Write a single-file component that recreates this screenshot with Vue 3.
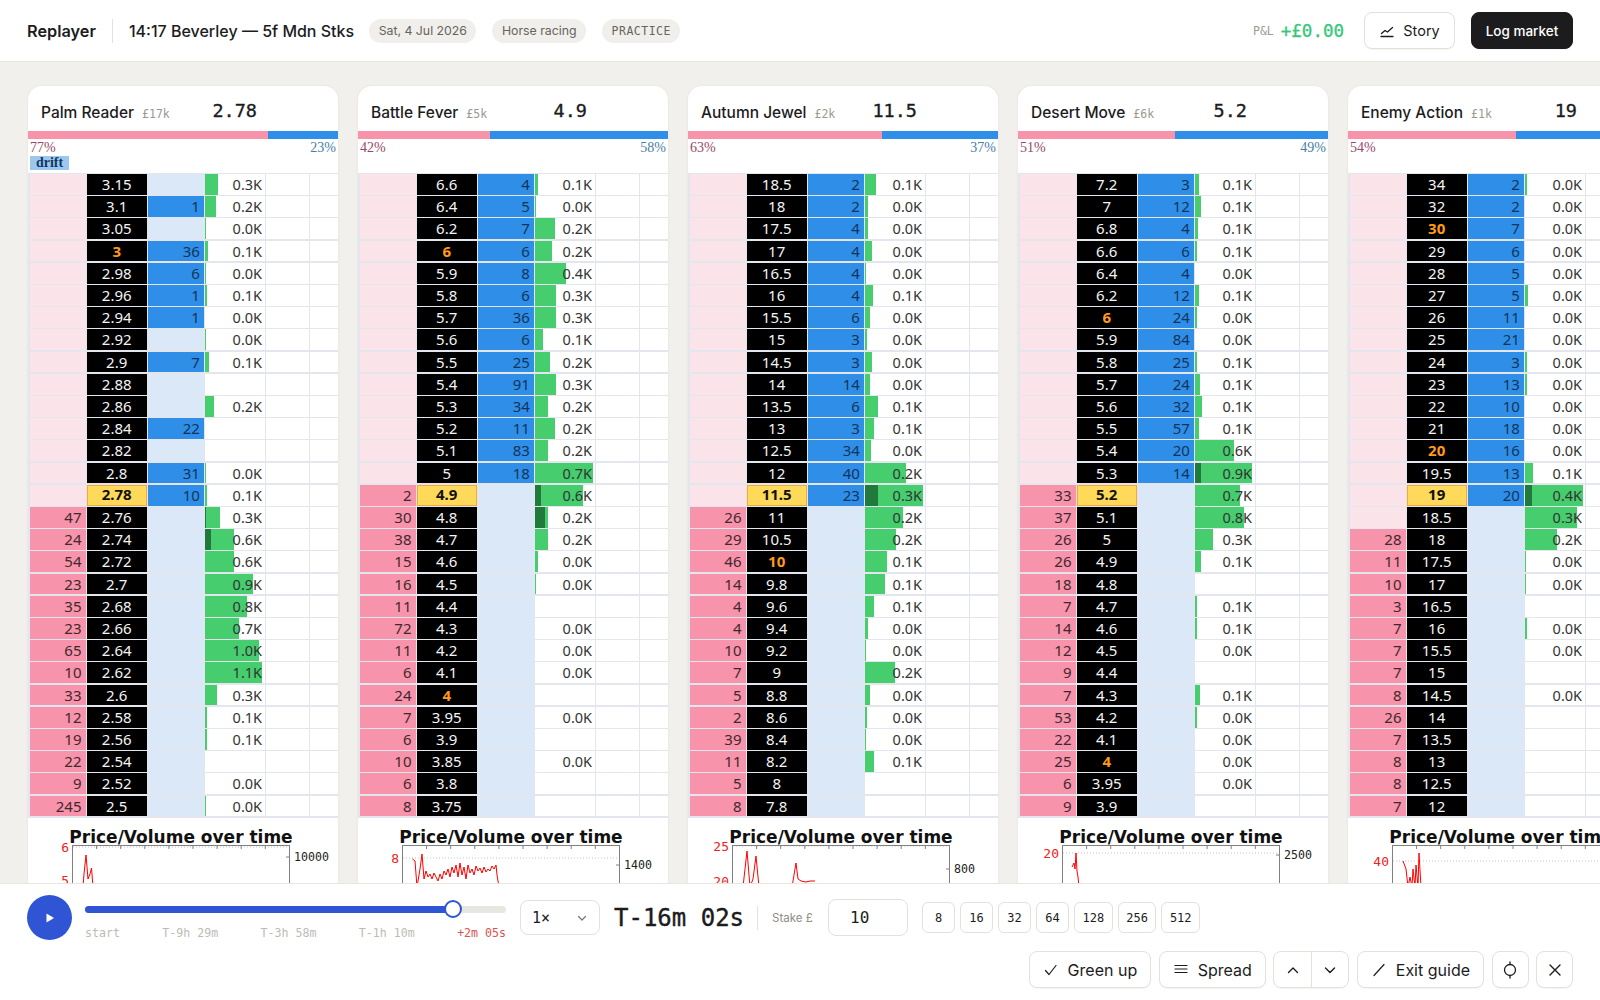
<template>
  <div class="app">
    <header class="topbar">
      <span class="brand">Replayer</span>
      <span class="vline"></span>
      <span class="race">14:17 Beverley — 5f Mdn Stks</span>
      <span class="pill">Sat, 4 Jul 2026</span>
      <span class="pill">Horse racing</span>
      <span class="pill pill--mono">PRACTICE</span>
      <div class="topbar-right">
        <span class="pnl-label">P&amp;L</span>
        <span class="pnl-value">+£0.00</span>
        <button type="button" class="btn btn--story">
          <svg width="16" height="16" viewBox="0 0 16 16" fill="none" stroke="currentColor" stroke-width="1.3" stroke-linecap="round" stroke-linejoin="round">
            <path d="M2 13.5h12" />
            <path d="M2.5 10.5l3.5-3 2.5 1.5 5-4.5" />
          </svg>
          Story
        </button>
        <button type="button" class="btn btn--dark">Log market</button>
      </div>
    </header>

    <main class="board">
      <section v-for="m in markets" :key="m.name" class="card">
        <div class="card-head">
          <span class="runner">{{ m.name }}</span>
          <span class="matched">{{ m.matched }}</span>
          <span class="ltp">{{ m.ltp }}</span>
        </div>
        <div class="split">
          <div class="split-back" :style="{ width: m.barPct + '%' }"></div>
          <div class="split-lay"></div>
        </div>
        <div class="meta">
          <div class="meta-pcts">
            <span class="pct-back">{{ m.backPct }}%</span>
            <span class="pct-lay">{{ 100 - m.backPct }}%</span>
          </div>
          <span v-if="m.drift" class="drift">drift</span>
        </div>
        <div class="ladder">
          <div v-for="(r, i) in m.rows" :key="r[1]" class="row">
            <div class="cell back" :class="{ 'back--on': r[0] }">{{ r[0] }}</div>
            <div class="cell price" :class="{ 'price--cur': i === 14, 'price--round': i !== 14 && roundPrices.includes(r[1]) }">{{ r[1] }}</div>
            <div class="cell lay" :class="{ 'lay--on': r[2] }">{{ r[2] }}</div>
            <div class="cell vol">
              <span v-if="r[4]" class="vol-bar" :style="{ width: r[4] + 'px' }"></span>
              <span v-if="r[5]" class="vol-mine" :style="{ width: r[5] + 'px' }"></span>
              <span class="vol-text">{{ r[3] }}</span>
            </div>
            <div class="cell blank"></div>
            <div class="cell blank"></div>
          </div>
        </div>
        <svg class="chart" width="310" height="170" viewBox="0 0 310 170">
          <text x="153" y="22" class="chart-title" text-anchor="middle">Price/Volume over time</text>
          <line x1="45" x2="261" :y1="m.gridY" :y2="m.gridY" class="chart-grid" />
          <rect x="44.5" y="24.5" width="217" height="140" class="chart-frame" />
          <line v-for="t in 8" :key="t" :x1="44.5 + t * 24.1" :x2="44.5 + t * 24.1" y1="25" y2="28" class="chart-tick" />
          <polyline :points="m.line" class="chart-line" />
          <text v-for="l in m.left" :key="l[0]" x="41" :y="l[1] + 5" class="chart-left" text-anchor="end">{{ l[0] }}</text>
          <line x1="258" x2="261" :y1="m.right[1]" :y2="m.right[1]" class="chart-tick" />
          <text x="266" :y="m.right[1] + 4" class="chart-right">{{ m.right[0] }}</text>
        </svg>
      </section>
    </main>

    <footer class="dock">
      <div class="dock-row">
        <button type="button" class="play" aria-label="Play">
          <svg width="12" height="12" viewBox="0 0 12 12"><path d="M2.5 1.5v9l7.5-4.5z" fill="#fff" /></svg>
        </button>
        <div class="scrub">
          <div class="track">
            <div class="track-fill"></div>
            <span class="thumb"></span>
          </div>
          <div class="scrub-labels">
            <span>start</span>
            <span>T-9h 29m</span>
            <span>T-3h 58m</span>
            <span>T-1h 10m</span>
            <span class="scrub-end">+2m 05s</span>
          </div>
        </div>
        <div class="speed">
          <span>1×</span>
          <svg width="12" height="12" viewBox="0 0 12 12" fill="none" stroke="#77756f" stroke-width="1.2" stroke-linecap="round" stroke-linejoin="round"><path d="M2.5 4.5L6 8l3.5-3.5" /></svg>
        </div>
        <span class="clock">T-16m 02s</span>
        <span class="vline vline--dock"></span>
        <span class="stake-label">Stake £</span>
        <div class="stake">10</div>
        <div class="chips">
          <button v-for="c in stakes" :key="c" type="button" class="chip">{{ c }}</button>
        </div>
      </div>
      <div class="dock-row dock-row--actions">
        <button type="button" class="btn btn--action">
          <svg width="16" height="16" viewBox="0 0 16 16" fill="none" stroke="currentColor" stroke-width="1.2" stroke-linecap="round" stroke-linejoin="round"><path d="M2.5 8.5l3.5 4L13 3.5" /></svg>
          Green up
        </button>
        <button type="button" class="btn btn--action">
          <svg width="16" height="16" viewBox="0 0 16 16" fill="none" stroke="currentColor" stroke-width="1.2" stroke-linecap="round"><path d="M2 3.5h12M2 7h12M2 10.5h12" /></svg>
          Spread
        </button>
        <div class="stepper">
          <button type="button" class="step" aria-label="Up">
            <svg width="14" height="14" viewBox="0 0 14 14" fill="none" stroke="currentColor" stroke-width="1.4" stroke-linecap="round" stroke-linejoin="round"><path d="M2.5 9.5L7 5l4.5 4.5" /></svg>
          </button>
          <button type="button" class="step" aria-label="Down">
            <svg width="14" height="14" viewBox="0 0 14 14" fill="none" stroke="currentColor" stroke-width="1.4" stroke-linecap="round" stroke-linejoin="round"><path d="M2.5 5L7 9.5 11.5 5" /></svg>
          </button>
        </div>
        <button type="button" class="btn btn--action">
          <svg width="16" height="16" viewBox="0 0 16 16" fill="none" stroke="currentColor" stroke-width="1.2" stroke-linecap="round"><path d="M3 13.5L13 2.5" /></svg>
          Exit guide
        </button>
        <button type="button" class="btn btn--icon" aria-label="Focus">
          <svg width="16" height="18" viewBox="0 0 16 18" fill="none" stroke="currentColor" stroke-width="1.3" stroke-linecap="round"><circle cx="8" cy="9" r="5.5" /><path d="M8 1v2.5M8 14.5V17" /></svg>
        </button>
        <button type="button" class="btn btn--icon" aria-label="Close">
          <svg width="14" height="14" viewBox="0 0 14 14" fill="none" stroke="currentColor" stroke-width="1.4" stroke-linecap="round"><path d="M2 2l10 10M12 2L2 12" /></svg>
        </button>
      </div>
    </footer>
  </div>
</template>

<script setup>
const stakes = [8, 16, 32, 64, 128, 256, 512]
const roundPrices = ['3', '4', '6', '10', '20', '30']

// [back, price, lay, volume, bar px, own-money px]
const markets = [
  {
    name: 'Palm Reader', matched: '£17k', ltp: '2.78', backPct: 77, barPct: 77.5, drift: true, gridY: 26,
    left: [['6', 26], ['5', 59]], right: ['10000', 36],
    line: '55,66 56,53 58,34 60,58 62,53 63.5,47 65,66',
    rows: [
      ['', '3.15', '', '0.3K', 12.7], ['', '3.1', '1', '0.2K', 10.7], ['', '3.05', '', '0.0K', 1],
      ['', '3', '36', '0.1K', 2.7], ['', '2.98', '6', '0.0K', 1], ['', '2.96', '1', '0.1K', 2],
      ['', '2.94', '1', '0.0K', 0], ['', '2.92', '', '0.0K', 1], ['', '2.9', '7', '0.1K', 4.3],
      ['', '2.88', '', ''], ['', '2.86', '', '0.2K', 9.3], ['', '2.84', '22', ''],
      ['', '2.82', '', ''], ['', '2.8', '31', '0.0K', 1], ['', '2.78', '10', '0.1K', 1.5],
      ['47', '2.76', '', '0.3K', 15, 1], ['24', '2.74', '', '0.6K', 28.7, 6], ['54', '2.72', '', '0.6K', 28.7],
      ['23', '2.7', '', '0.9K', 47.7], ['35', '2.68', '', '0.8K', 42], ['23', '2.66', '', '0.7K', 34],
      ['65', '2.64', '', '1.0K', 54], ['10', '2.62', '', '1.1K', 57], ['33', '2.6', '', '0.3K', 12],
      ['12', '2.58', '', '0.1K', 1.5], ['19', '2.56', '', '0.1K', 2], ['22', '2.54', '', ''],
      ['9', '2.52', '', '0.0K'], ['245', '2.5', '', '0.0K', 1],
    ],
  },
  {
    name: 'Battle Fever', matched: '£5k', ltp: '4.9', backPct: 42, barPct: 42.5, gridY: 37,
    left: [['8', 37]], right: ['1400', 44],
    line: '54.5,38 57,40 59,66 62,48 64,33 66,58 68,50 70,56 72,53 74,58 76,52 78,56 80,60 82,53 84,58 86,50 88,54 90,48 92,56 94,46 96,52 98,44 100,56 102,42 104,54 106,46 108,58 110,44 112,52 114,48 116,54 118,45 120,50 122,47 124,52 126,46 128,51 130,48 132,50 134,45 136,48 138,44 139,54 141,66',
    rows: [
      ['', '6.6', '4', '0.1K', 3], ['', '6.4', '5', '0.0K', 1], ['', '6.2', '7', '0.2K', 20],
      ['', '6', '6', '0.2K', 17], ['', '5.9', '8', '0.4K', 30.6], ['', '5.8', '6', '0.3K', 21],
      ['', '5.7', '36', '0.3K', 21], ['', '5.6', '6', '0.1K', 8], ['', '5.5', '25', '0.2K', 15],
      ['', '5.4', '91', '0.3K', 21], ['', '5.3', '34', '0.2K', 13], ['', '5.2', '11', '0.2K', 20],
      ['', '5.1', '83', '0.2K', 12.6], ['', '5', '18', '0.7K', 57.5], ['2', '4.9', '', '0.6K', 48, 6],
      ['30', '4.8', '', '0.2K', 13, 10], ['38', '4.7', '', '0.2K', 13], ['15', '4.6', '', '0.0K', 3],
      ['16', '4.5', '', '0.0K', 1], ['11', '4.4', '', ''], ['72', '4.3', '', '0.0K'],
      ['11', '4.2', '', '0.0K'], ['6', '4.1', '', '0.0K'], ['24', '4', '', ''],
      ['7', '3.95', '', '0.0K'], ['6', '3.9', '', ''], ['10', '3.85', '', '0.0K'],
      ['6', '3.8', '', ''], ['8', '3.75', '', ''],
    ],
  },
  {
    name: 'Autumn Jewel', matched: '£2k', ltp: '11.5', backPct: 63, barPct: 62.6, gridY: 25,
    left: [['25', 25], ['20', 60]], right: ['800', 48],
    line: '55,66 59,30 62,66 65,58 68,35 71,66 104,66 108,42 110,58 113,60 118,61 122,60 127,60',
    rows: [
      ['', '18.5', '2', '0.1K', 10.6], ['', '18', '2', '0.0K', 3], ['', '17.5', '4', '0.0K', 2.5],
      ['', '17', '4', '0.0K', 6.5], ['', '16.5', '4', '0.0K', 0.5], ['', '16', '4', '0.1K', 7.8],
      ['', '15.5', '6', '0.0K', 5], ['', '15', '3', '0.0K', 1.5], ['', '14.5', '3', '0.0K', 7],
      ['', '14', '14', '0.0K', 5.3], ['', '13.5', '6', '0.1K', 13], ['', '13', '3', '0.1K', 8.6],
      ['', '12.5', '34', '0.0K', 6], ['', '12', '40', '0.2K', 41], ['', '11.5', '23', '0.3K', 57.5, 13],
      ['26', '11', '', '0.2K', 37.5], ['29', '10.5', '', '0.2K', 30.6], ['46', '10', '', '0.1K', 21.6],
      ['14', '9.8', '', '0.1K', 20], ['4', '9.6', '', '0.1K', 8.6], ['4', '9.4', '', '0.0K', 3],
      ['10', '9.2', '', '0.0K', 1], ['7', '9', '', '0.2K', 30], ['5', '8.8', '', '0.0K', 4.5],
      ['2', '8.6', '', '0.0K', 1.5], ['39', '8.4', '', '0.0K', 1], ['11', '8.2', '', '0.1K', 9.4],
      ['5', '8', '', ''], ['8', '7.8', '', ''],
    ],
  },
  {
    name: 'Desert Move', matched: '£6k', ltp: '5.2', backPct: 51, barPct: 50.7, gridY: 32,
    left: [['20', 32]], right: ['2500', 34],
    line: '54,46 56,42 57,48 58,32 59,50 60,56 61,66',
    rows: [
      ['', '7.2', '3', '0.1K', 4], ['', '7', '12', '0.1K', 6], ['', '6.8', '4', '0.1K', 2.6],
      ['', '6.6', '6', '0.1K', 2], ['', '6.4', '4', '0.0K'], ['', '6.2', '12', '0.1K', 4],
      ['', '6', '24', '0.0K', 1.5], ['', '5.9', '84', '0.0K'], ['', '5.8', '25', '0.1K', 2],
      ['', '5.7', '24', '0.1K', 5], ['', '5.6', '32', '0.1K', 7], ['', '5.5', '57', '0.1K', 4],
      ['', '5.4', '20', '0.6K', 39], ['', '5.3', '14', '0.9K', 57, 6], ['33', '5.2', '', '0.7K', 45],
      ['37', '5.1', '', '0.8K', 49], ['26', '5', '', '0.3K', 18], ['26', '4.9', '', '0.1K', 6],
      ['18', '4.8', '', ''], ['7', '4.7', '', '0.1K', 2], ['14', '4.6', '', '0.1K', 2],
      ['12', '4.5', '', '0.0K'], ['9', '4.4', '', ''], ['7', '4.3', '', '0.1K', 4.5],
      ['53', '4.2', '', '0.0K', 1.5], ['22', '4.1', '', '0.0K'], ['25', '4', '', '0.0K'],
      ['6', '3.95', '', '0.0K'], ['9', '3.9', '', ''],
    ],
  },
  {
    name: 'Enemy Action', matched: '£1k', ltp: '19', backPct: 54, barPct: 54.3, gridY: 40,
    left: [['40', 40]], right: ['', 40],
    line: '55,40 58,48 60,66 62,56 64,66 65,48 67,66 68,44 70,66 71,32 73,66',
    rows: [
      ['', '34', '2', '0.0K', 1.5], ['', '32', '2', '0.0K'], ['', '30', '7', '0.0K'],
      ['', '29', '6', '0.0K'], ['', '28', '5', '0.0K'], ['', '27', '5', '0.0K', 3],
      ['', '26', '11', '0.0K'], ['', '25', '21', '0.0K'], ['', '24', '3', '0.0K', 1.5],
      ['', '23', '13', '0.0K', 2], ['', '22', '10', '0.0K'], ['', '21', '18', '0.0K'],
      ['', '20', '16', '0.0K'], ['', '19.5', '13', '0.1K', 8], ['', '19', '20', '0.4K', 57.5, 7],
      ['', '18.5', '', '0.3K', 51.5], ['28', '18', '', '0.2K', 32], ['11', '17.5', '', '0.0K', 1],
      ['10', '17', '', '0.0K', 1], ['3', '16.5', '', ''], ['7', '16', '', '0.0K', 2],
      ['7', '15.5', '', '0.0K'], ['7', '15', '', ''], ['8', '14.5', '', '0.0K'],
      ['26', '14', '', ''], ['7', '13.5', '', ''], ['8', '13', '', ''],
      ['8', '12.5', '', ''], ['7', '12', '', ''],
    ],
  },
]
</script>

<style>
html,
body {
  margin: 0;
  height: 100%;
  overflow: hidden;
}
</style>

<style scoped>
.app {
  display: flex;
  flex-direction: column;
  width: 1600px;
  height: 1000px;
  overflow: hidden;
  background: #f1f0ec;
  font-family: Inter, "Noto Sans", sans-serif;
  color: #1c1c1e;
}

button {
  font-family: inherit;
  color: inherit;
  cursor: pointer;
}

.topbar {
  flex: none;
  display: flex;
  align-items: center;
  height: 61px;
  padding: 0 27px;
  background: #fff;
  border-bottom: 1px solid #e8e6e1;
}

.brand {
  font-size: 16.3px;
  font-weight: 600;
}

.vline {
  width: 1px;
  height: 24px;
  margin: 0 16px;
  background: #e3e1db;
}

.race {
  font-size: 16px;
  font-weight: 500;
  margin-right: 15px;
}

.pill {
  display: flex;
  align-items: center;
  height: 24px;
  padding: 0 9.5px;
  margin-right: 16px;
  border-radius: 12px;
  background: #f0efeb;
  font-size: 12.3px;
  color: #66645f;
}

.pill--mono {
  font-family: "DejaVu Sans Mono", monospace;
  font-size: 11.5px;
  letter-spacing: 0.5px;
}

.topbar-right {
  margin-left: auto;
  display: flex;
  align-items: center;
}

.pnl-label {
  font-family: "DejaVu Sans Mono", monospace;
  font-size: 11.5px;
  color: #9a9891;
  margin-right: 7px;
}

.pnl-value {
  font-family: "DejaVu Sans Mono", monospace;
  font-size: 17.5px;
  color: #35c878;
  margin-right: 20px;
  -webkit-text-stroke: 0.3px #35c878;
}

.btn {
  display: flex;
  align-items: center;
  justify-content: center;
  gap: 8px;
  height: 37px;
  padding: 0 14px;
  border: 1px solid #e3e1db;
  border-radius: 8px;
  background: #fff;
  font-size: 14.5px;
  box-shadow: 0 1px 1px rgba(0, 0, 0, 0.04);
}

.btn--story {
  width: 91px;
  padding: 0;
  margin-right: 16px;
}

.btn--dark {
  width: 102px;
  padding: 0;
  border-color: #1c1c1e;
  background: #1c1c1e;
  color: #fff;
  font-weight: 500;
  font-size: 13.5px;
}

.btn--action {
  gap: 9px;
  padding: 0 13px;
  font-size: 16px;
}

.btn--icon {
  width: 37px;
  padding: 0;
}

.board {
  flex: 1;
  min-height: 0;
  display: flex;
  gap: 20px;
  padding: 24px 0 0 28px;
  overflow: hidden;
}

.card {
  flex: none;
  width: 310px;
  height: 960px;
  background: #fff;
  border-radius: 14px 14px 0 0;
  box-shadow: 0 0 3px rgba(0, 0, 0, 0.06);
}

.card-head {
  display: flex;
  align-items: baseline;
  height: 45px;
  padding: 0 81px 0 13px;
  box-sizing: border-box;
  line-height: 49px;
}

.runner {
  position: relative;
  top: 1px;
  font-size: 15.5px;
  font-weight: 500;
}

.matched {
  position: relative;
  top: 1px;
  margin-left: 8px;
  font-family: "DejaVu Sans Mono", monospace;
  font-size: 11.5px;
  color: #9a9891;
}

.ltp {
  margin-left: auto;
  font-family: "DejaVu Sans Mono", monospace;
  font-size: 18.5px;
  font-weight: 500;
  -webkit-text-stroke: 0.35px #1c1c1e;
}

.split {
  display: flex;
  height: 8px;
}

.split-back {
  background: #f793aa;
}

.split-lay {
  flex: 1;
  background: #2f8fe8;
}

.meta {
  height: 33.5px;
  padding: 0 2px;
  box-sizing: border-box;
  font-family: "Liberation Serif", serif;
  font-size: 14px;
  line-height: 17px;
}

.meta-pcts {
  display: flex;
  justify-content: space-between;
}

.pct-back {
  color: #96486a;
}

.pct-lay {
  color: #4a7ea6;
}

.drift {
  display: block;
  width: 39px;
  height: 14px;
  margin-top: 0;
  background: #9cc8f0;
  color: #12375f;
  font-weight: 700;
  line-height: 14px;
  text-align: center;
}

.ladder {
  padding: 1.5px 0 0 1.5px;
  background: #e4e6ee;
}

.row {
  display: grid;
  grid-template-columns: 56px 60px 56px 60px 43px 1fr;
  column-gap: 1.2px;
  height: 22.21px;
  padding-bottom: 1.5px;
  box-sizing: border-box;
}

.cell {
  position: relative;
  padding-right: 4px;
  font-family: "Noto Sans", sans-serif;
  font-size: 15px;
  line-height: 20.7px;
  text-align: right;
  background: #fff;
}

.back {
  background: #fbe3ea;
  color: #40282f;
}

.back--on {
  background: #f793aa;
}

.price {
  padding: 0;
  background: #000;
  color: #f4f4f4;
  text-align: center;
}

.price--cur {
  box-sizing: border-box;
  border: 1.5px solid #f2a83a;
  background: #ffd95a;
  color: #111;
  font-weight: 700;
  line-height: 17.7px;
}

.price--round {
  color: #ff9a1a;
  font-weight: 700;
}

.lay {
  background: #dbe8f8;
  color: #12345a;
}

.lay--on {
  background: #2f8fe8;
}

.vol {
  padding-right: 3px;
  font-size: 14.5px;
}

.vol-bar,
.vol-mine {
  position: absolute;
  top: 0;
  bottom: 0;
  left: 0;
  background: #45cd6e;
}

.vol-mine {
  background: #1f7a3c;
}

.vol-text {
  position: relative;
  color: #333;
}

.chart {
  display: block;
  margin-top: 2.8px;
}

.chart-title {
  font-family: "DejaVu Sans", sans-serif;
  font-size: 17px;
  font-weight: 700;
  fill: #111;
}

.chart-frame {
  fill: none;
  stroke: #808080;
  stroke-width: 1;
}

.chart-grid {
  stroke: #c4c4c4;
  stroke-width: 1;
  stroke-dasharray: 1 2;
}

.chart-tick {
  stroke: #808080;
  stroke-width: 1;
}

.chart-line {
  fill: none;
  stroke: #f00;
  stroke-width: 1;
}

.chart-left {
  font-family: "DejaVu Sans Mono", monospace;
  font-size: 13px;
  fill: #f02020;
}

.chart-right {
  font-family: "DejaVu Sans Mono", monospace;
  font-size: 11.6px;
  fill: #222;
}

.dock {
  position: relative;
  z-index: 2;
  flex: none;
  height: 117px;
  box-sizing: border-box;
  padding: 11px 27px 0;
  background: #fff;
  border-top: 1px solid #e8e6e1;
}

.dock-row {
  display: flex;
  align-items: center;
  gap: 14px;
  height: 45px;
}

.dock-row--actions {
  justify-content: flex-end;
  gap: 7.5px;
  height: 37px;
  margin-top: 11px;
}

.play {
  display: flex;
  align-items: center;
  justify-content: center;
  width: 45px;
  height: 45px;
  padding: 0;
  border: none;
  border-radius: 50%;
  background: #2f55d4;
}

.scrub {
  align-self: flex-start;
  width: 421px;
  margin: 11px 0 0 -1px;
}

.track {
  position: relative;
  height: 7px;
  border-radius: 4px;
  background: #e8e6e1;
}

.track-fill {
  width: 87.4%;
  height: 100%;
  border-radius: 4px;
  background: #2f55d4;
}

.thumb {
  position: absolute;
  top: -6px;
  left: 87.4%;
  width: 18px;
  height: 18px;
  margin-left: -9px;
  box-sizing: border-box;
  border: 2.5px solid #2f55d4;
  border-radius: 50%;
  background: #fff;
}

.scrub-labels {
  display: flex;
  justify-content: space-between;
  margin-top: 13px;
  font-family: "DejaVu Sans Mono", monospace;
  font-size: 11.6px;
  line-height: 14px;
  color: #bdbbb5;
}

.scrub-end {
  color: #d9534f;
}

.speed {
  display: flex;
  align-items: center;
  justify-content: space-between;
  width: 80px;
  height: 35px;
  padding: 0 11px;
  box-sizing: border-box;
  border: 1px solid #e3e1db;
  border-radius: 8px;
  font-family: "DejaVu Sans Mono", monospace;
  font-size: 15px;
}

.clock {
  width: 129px;
  font-family: "DejaVu Sans Mono", monospace;
  font-size: 24px;
  font-weight: 500;
  white-space: nowrap;
  -webkit-text-stroke: 0.4px #1c1c1e;
}

.vline--dock {
  margin: 0;
}

.stake-label {
  width: 42px;
  font-size: 11.5px;
  color: #8f8d86;
  white-space: nowrap;
}

.stake {
  width: 80px;
  height: 37px;
  padding-left: 21px;
  box-sizing: border-box;
  border: 1px solid #e3e1db;
  border-radius: 8px;
  font-family: "DejaVu Sans Mono", monospace;
  font-size: 16px;
  line-height: 35px;
}

.chips {
  display: flex;
  gap: 5px;
}

.chip {
  min-width: 33px;
  height: 31px;
  padding: 0 7.5px;
  border: 1px solid #e3e1db;
  border-radius: 6px;
  background: #fff;
  font-family: "DejaVu Sans Mono", monospace;
  font-size: 12px;
}

.stepper {
  display: flex;
  width: 76px;
  height: 37px;
  box-sizing: border-box;
  border: 1px solid #e3e1db;
  border-radius: 8px;
  box-shadow: 0 1px 1px rgba(0, 0, 0, 0.04);
}

.step {
  flex: 1;
  display: flex;
  align-items: center;
  justify-content: center;
  padding: 0;
  border: none;
  background: none;
}

.step + .step {
  border-left: 1px solid #e3e1db;
}
</style>
